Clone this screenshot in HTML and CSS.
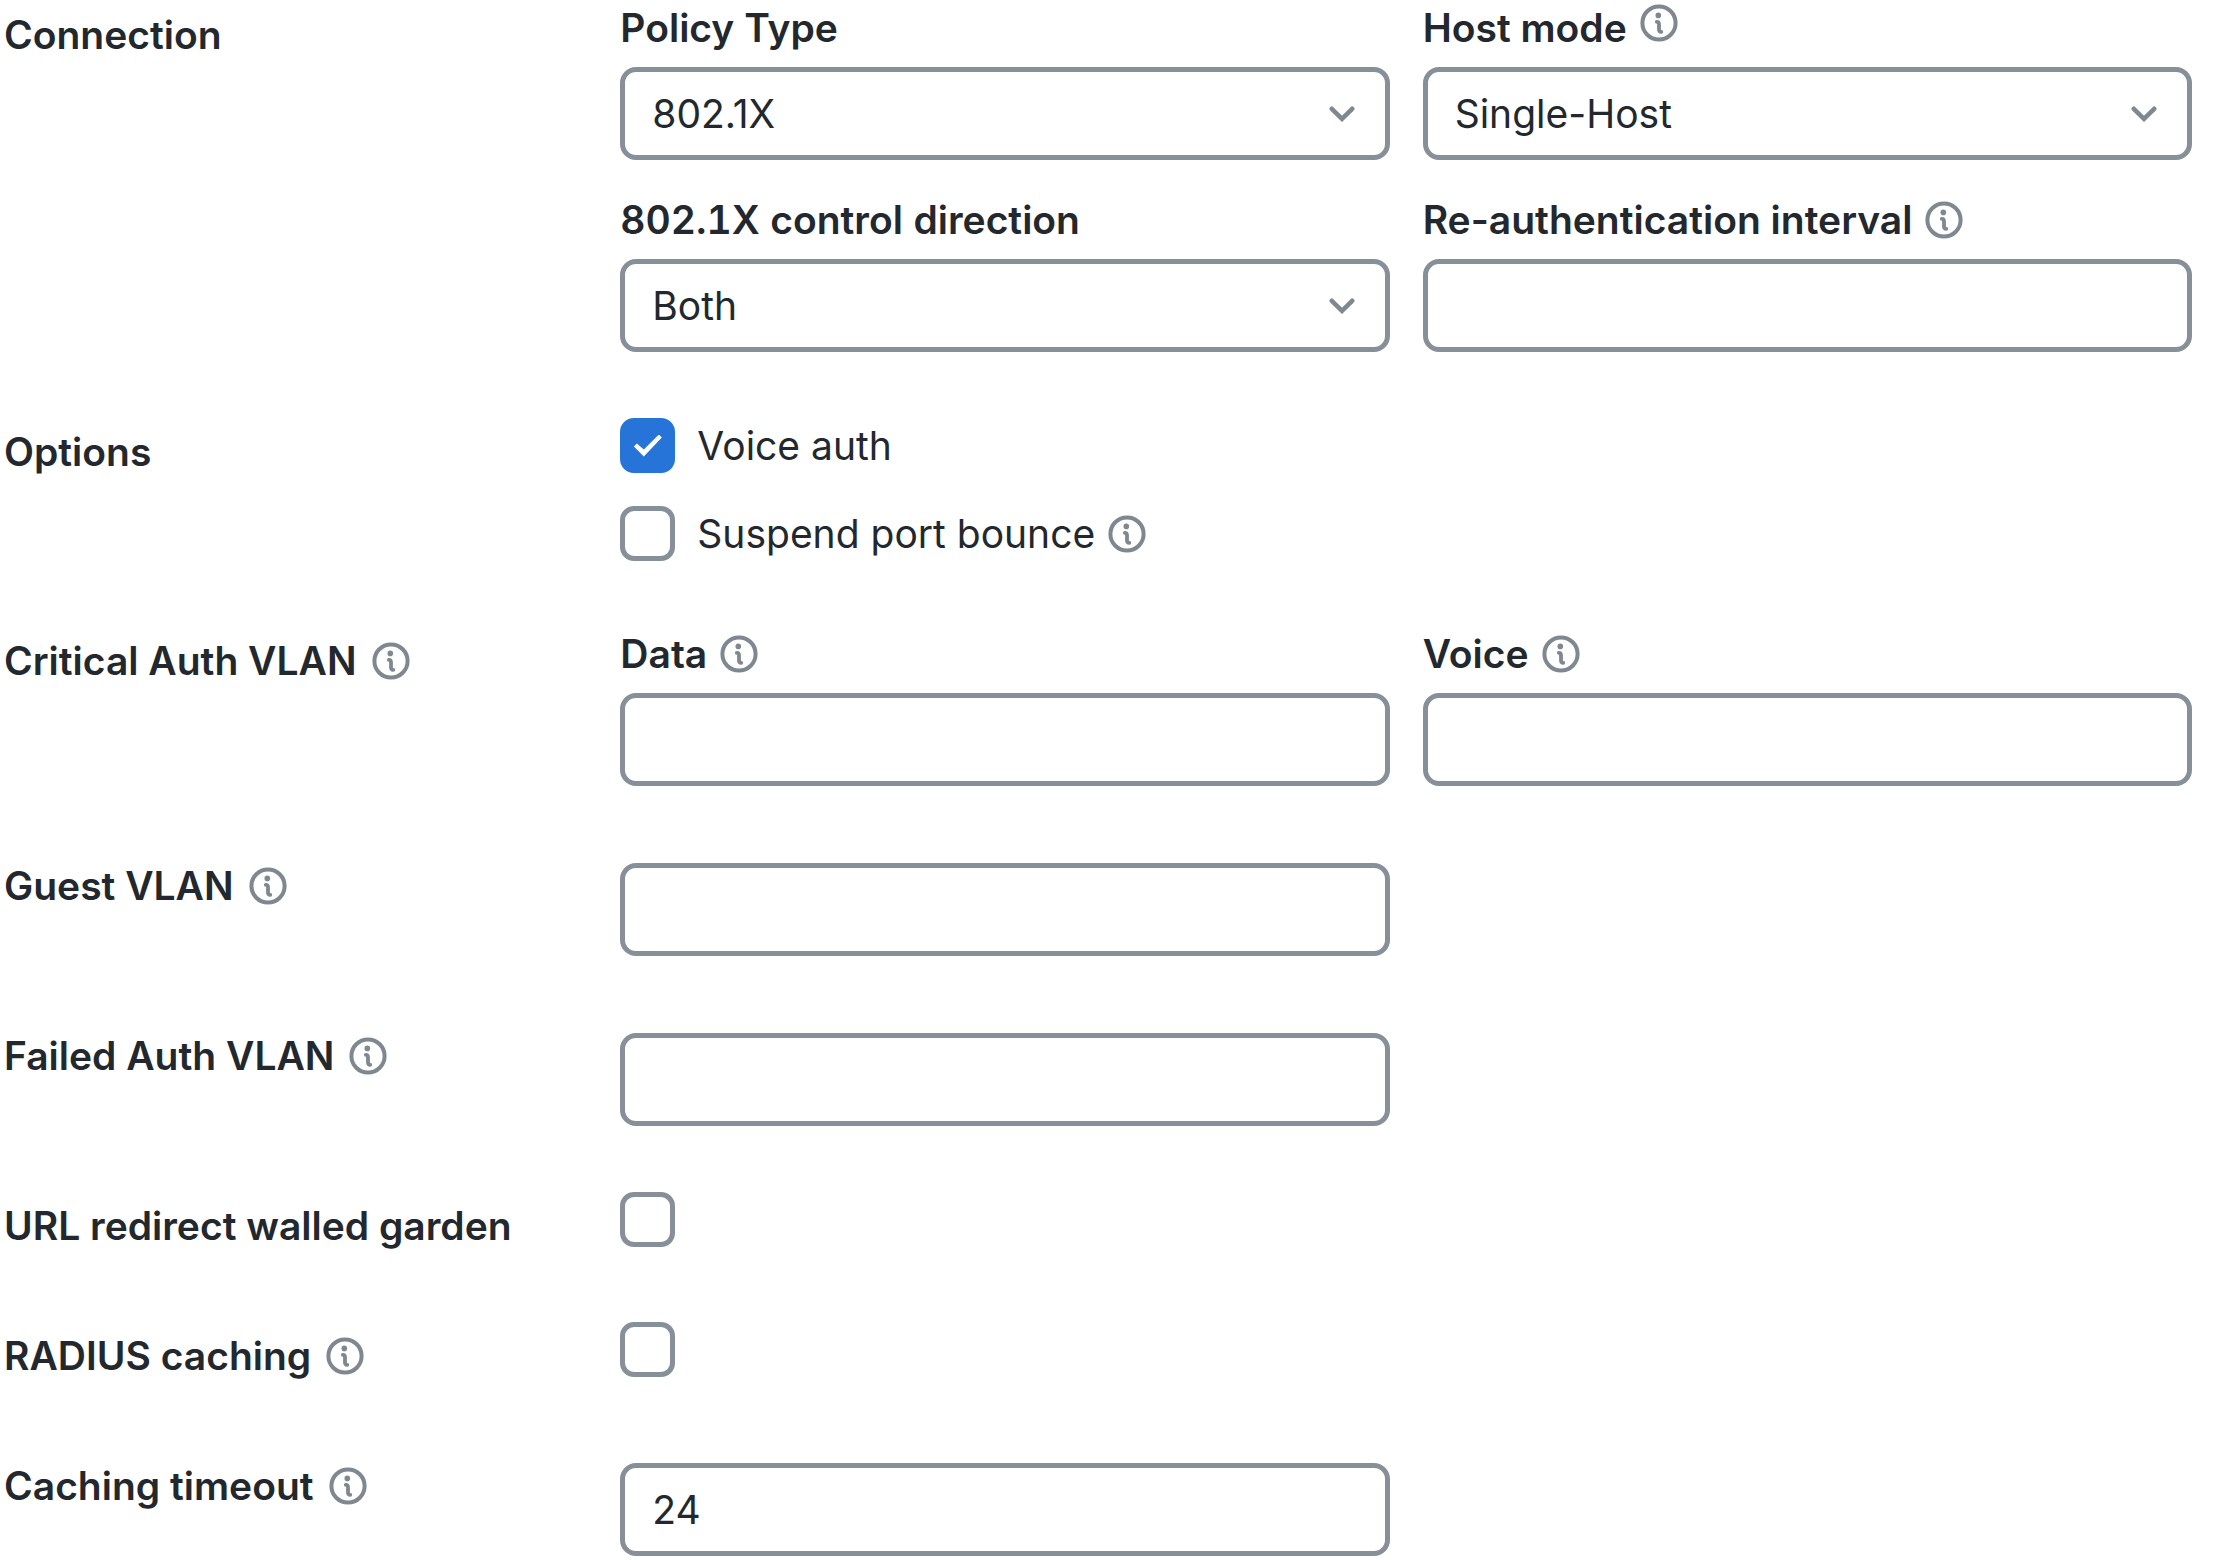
FILE: index.html
```html
<!DOCTYPE html>
<html lang="en">
<head>
    <meta charset="UTF-8">
    <meta name="viewport" content="width=device-width, initial-scale=1.0">
    <title>Access Policy</title>
    <link rel="stylesheet" href="styles.css">
</head>
<body>
    <!-- Shared icons -->
    <svg class="sprite" aria-hidden="true">
        <symbol id="icon-info" viewBox="0 0 38 38">
            <circle cx="19" cy="19" r="16.6" fill="none" stroke="currentColor" stroke-width="4"/>
            <circle cx="18.3" cy="11.4" r="2.8" fill="currentColor"/>
            <path d="M16.8 17.8c1.7 0 2.2.9 2.2 2.4v5.2c0 1.6.6 2.3 2.3 2.4" fill="none" stroke="currentColor" stroke-width="3.8" stroke-linecap="round"/>
        </symbol>
        <symbol id="icon-chevron" viewBox="0 0 26 16">
            <path d="M2.8 2.8 13 12.8 23.2 2.8" fill="none" stroke="currentColor" stroke-width="4.6" stroke-linecap="round"/>
        </symbol>
    </svg>

    <form class="policy-form">
        <div class="row">
            <div class="row-title"><h2>Connection</h2></div>
            <div class="fields">
                <div class="field">
                    <div class="field-label"><label for="policyType">Policy Type</label></div>
                    <div class="select">
                        <select id="policyType">
                            <option>802.1X</option>
                        </select>
                        <svg class="chevron" aria-hidden="true"><use href="#icon-chevron"/></svg>
                    </div>
                </div>
                <div class="field">
                    <div class="field-label">
                        <label for="hostMode">Host mode</label>
                        <button type="button" class="info raised" aria-label="About host mode"><svg><use href="#icon-info"/></svg></button>
                    </div>
                    <div class="select">
                        <select id="hostMode">
                            <option>Single-Host</option>
                        </select>
                        <svg class="chevron" aria-hidden="true"><use href="#icon-chevron"/></svg>
                    </div>
                </div>
                <div class="field">
                    <div class="field-label numeric"><label for="direction">802.1X control direction</label></div>
                    <div class="select">
                        <select id="direction">
                            <option>Both</option>
                        </select>
                        <svg class="chevron" aria-hidden="true"><use href="#icon-chevron"/></svg>
                    </div>
                </div>
                <div class="field">
                    <div class="field-label">
                        <label for="interval">Re-authentication interval</label>
                        <button type="button" class="info" aria-label="About re-authentication interval"><svg><use href="#icon-info"/></svg></button>
                    </div>
                    <input type="text" id="interval">
                </div>
            </div>
        </div>

        <div class="row">
            <div class="row-title"><h2>Options</h2></div>
            <div class="checks">
                <div class="check">
                    <input type="checkbox" id="voiceAuth" checked>
                    <label for="voiceAuth">Voice auth</label>
                </div>
                <div class="check">
                    <input type="checkbox" id="portBounce">
                    <label for="portBounce">Suspend port bounce</label>
                    <button type="button" class="info" aria-label="About suspend port bounce"><svg><use href="#icon-info"/></svg></button>
                </div>
            </div>
        </div>

        <div class="row">
            <div class="row-title">
                <h2>Critical Auth VLAN</h2>
                <button type="button" class="info" aria-label="About critical auth VLAN"><svg><use href="#icon-info"/></svg></button>
            </div>
            <div class="fields">
                <div class="field">
                    <div class="field-label">
                        <label for="criticalData">Data</label>
                        <button type="button" class="info" aria-label="About data VLAN"><svg><use href="#icon-info"/></svg></button>
                    </div>
                    <input type="text" id="criticalData">
                </div>
                <div class="field">
                    <div class="field-label">
                        <label for="criticalVoice">Voice</label>
                        <button type="button" class="info" aria-label="About voice VLAN"><svg><use href="#icon-info"/></svg></button>
                    </div>
                    <input type="text" id="criticalVoice">
                </div>
            </div>
        </div>

        <div class="row">
            <div class="row-title">
                <label for="guestVlan">Guest VLAN</label>
                <button type="button" class="info" aria-label="About guest VLAN"><svg><use href="#icon-info"/></svg></button>
            </div>
            <div class="fields unlabeled">
                <input type="text" id="guestVlan">
            </div>
        </div>

        <div class="row">
            <div class="row-title">
                <label for="failedVlan">Failed Auth VLAN</label>
                <button type="button" class="info" aria-label="About failed auth VLAN"><svg><use href="#icon-info"/></svg></button>
            </div>
            <div class="fields unlabeled">
                <input type="text" id="failedVlan">
            </div>
        </div>

        <div class="row">
            <div class="row-title"><label for="walledGarden">URL redirect walled garden</label></div>
            <div class="checks">
                <div class="check"><input type="checkbox" id="walledGarden"></div>
            </div>
        </div>

        <div class="row">
            <div class="row-title">
                <label for="radiusCaching">RADIUS caching</label>
                <button type="button" class="info" aria-label="About RADIUS caching"><svg><use href="#icon-info"/></svg></button>
            </div>
            <div class="checks">
                <div class="check"><input type="checkbox" id="radiusCaching"></div>
            </div>
        </div>

        <div class="row">
            <div class="row-title">
                <label for="cachingTimeout">Caching timeout</label>
                <button type="button" class="info" aria-label="About caching timeout"><svg><use href="#icon-info"/></svg></button>
            </div>
            <div class="fields unlabeled">
                <input type="text" id="cachingTimeout" value="24">
            </div>
        </div>
    </form>
</body>
</html>
```

FILE: styles.css
```css
* {
    margin: 0;
    padding: 0;
    box-sizing: border-box;
}

body {
    font-family: Inter, "Liberation Sans", sans-serif;
    font-size: 39px;
    line-height: 48px;
    color: #23282e;
    background: #fff;
}

.sprite {
    display: none;
}

.policy-form {
    display: flex;
    flex-direction: column;
    gap: 65px;
    padding: 0 21px 0 4px;
}

.row {
    display: grid;
    grid-template-columns: 1fr 2.55fr;
}

/* Left column */
.row-title {
    display: flex;
    align-items: center;
    align-self: start;
    gap: 15px;
    padding: 11px 0 6px;
}

.row-title h2,
.row-title label,
.field-label label {
    font-size: 39px;
    font-weight: 600;
}

/* Right column */
.fields {
    display: grid;
    grid-template-columns: 1fr 1fr;
    gap: 36px 33px;
    padding-top: 4px;
}

.fields.unlabeled {
    padding-top: 12px;
}

.field-label {
    display: flex;
    align-items: center;
    gap: 13px;
    margin-bottom: 15px;
}

.field-label.numeric {
    font-variant-numeric: tabular-nums;
}

input[type="text"],
select {
    display: block;
    width: 100%;
    height: 93px;
    padding: 0 27px;
    border: 5px solid #879099;
    border-radius: 16px;
    background: #fff;
    color: inherit;
    font: inherit;
    appearance: none;
}

.select {
    position: relative;
}

.chevron {
    position: absolute;
    top: 39px;
    right: 35px;
    width: 26px;
    height: 16px;
    color: #7f8890;
    pointer-events: none;
}

/* Checkboxes */
.checks {
    display: flex;
    flex-direction: column;
    gap: 33px;
    padding-top: 1px;
}

.check {
    display: flex;
    align-items: center;
}

.check label {
    margin-left: 22px;
}

.check .info {
    margin-left: 13px;
}

input[type="checkbox"] {
    display: grid;
    place-items: center;
    width: 55px;
    height: 55px;
    border: 5px solid #879099;
    border-radius: 14px;
    background: #fff;
    appearance: none;
}

input[type="checkbox"]:checked {
    border-color: #2774d9;
    background: #2774d9;
}

input[type="checkbox"]:checked::before {
    content: "";
    width: 28px;
    height: 22px;
    background: #fff;
    clip-path: polygon(0 12px, 3px 9px, 10px 15px, 25px 0, 28px 3px, 10px 22px);
}

/* Info icon */
.info {
    flex: none;
    width: 38px;
    height: 38px;
    border: none;
    background: none;
    color: #7f8890;
    cursor: pointer;
}

.info svg {
    display: block;
    width: 100%;
    height: 100%;
}

.info.raised {
    margin-bottom: 10px;
}
```
